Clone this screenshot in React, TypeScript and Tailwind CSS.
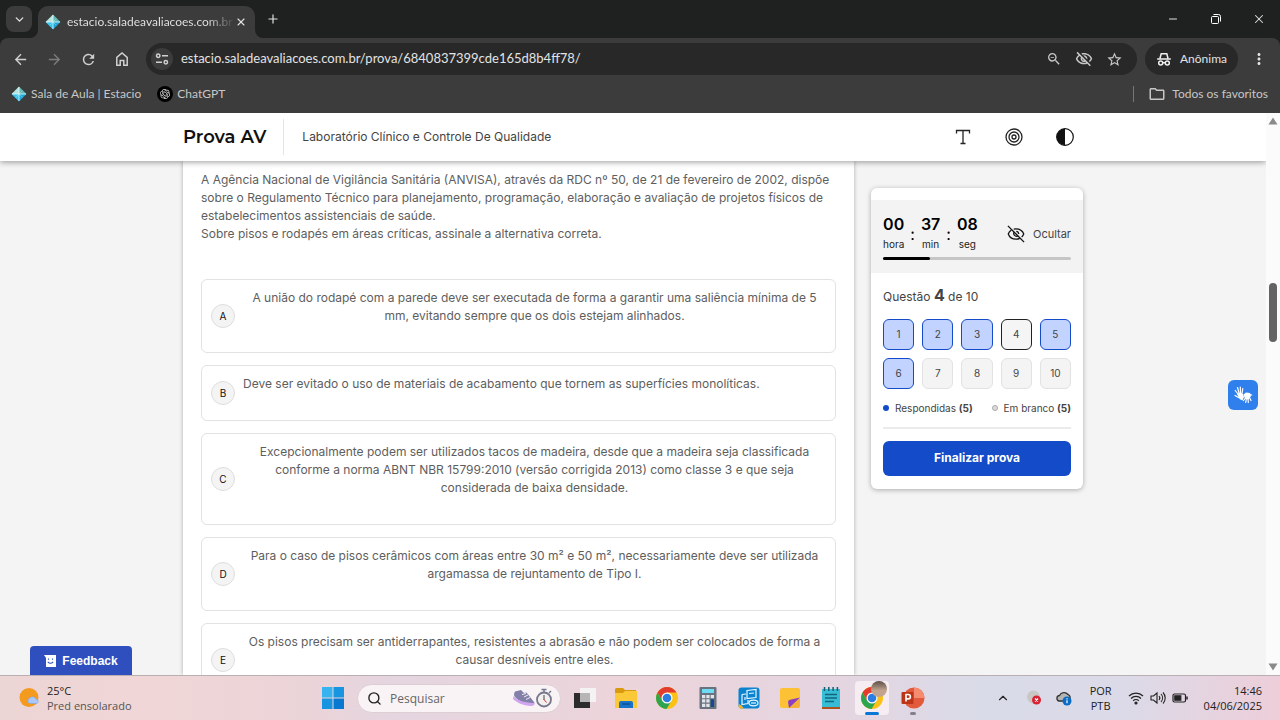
import type { ReactNode } from 'react';
import { ChevronDown, ChevronUp, Minus, Plus, Search, X } from 'lucide-react';
import {
  MdArrowBack,
  MdArrowForward,
  MdMoreVert,
  MdOutlineFolder,
  MdOutlineVisibilityOff,
  MdRefresh,
  MdStarBorder,
  MdZoomOut,
} from 'react-icons/md';
import { SiOpenai } from 'react-icons/si';

const options = [
  {
    letter: 'A',
    text: 'A união do rodapé com a parede deve ser executada de forma a garantir uma saliência mínima de 5 mm, evitando sempre que os dois estejam alinhados.',
    centered: true,
  },
  {
    letter: 'B',
    text: 'Deve ser evitado o uso de materiais de acabamento que tornem as superfícies monolíticas.',
    centered: false,
  },
  {
    letter: 'C',
    text: 'Excepcionalmente podem ser utilizados tacos de madeira, desde que a madeira seja classificada conforme a norma ABNT NBR 15799:2010 (versão corrigida 2013) como classe 3 e que seja considerada de baixa densidade.',
    centered: true,
  },
  {
    letter: 'D',
    text: 'Para o caso de pisos cerâmicos com áreas entre 30 m² e 50 m², necessariamente deve ser utilizada argamassa de rejuntamento de Tipo I.',
    centered: true,
  },
  {
    letter: 'E',
    text: 'Os pisos precisam ser antiderrapantes, resistentes a abrasão e não podem ser colocados de forma a causar desníveis entre eles.',
    centered: true,
  },
];

const answered = [1, 2, 3, 5, 6];
const current = 4;

function EstacioIcon() {
  return (
    <svg viewBox="0 0 16 16" className="size-4 shrink-0" aria-hidden="true">
      <path d="M8 0.5 15.5 8H8Z" fill="#5fb8b5" />
      <path d="M8 0.5 0.5 8H8Z" fill="#b5e2dc" />
      <path d="M0.5 8 8 15.5V8Z" fill="#35c4ee" />
      <path d="M15.5 8 8 15.5V8Z" fill="#1fa5d6" />
      <path d="M8 1v14M1 8h14" stroke="#e6fbff" strokeWidth="0.8" />
      <path d="M4.500 4.500l7 7M11.500 4.500l-7 7" stroke="#bdeef8" strokeWidth="0.4" />
    </svg>
  );
}

function TuneIcon() {
  return (
    <svg viewBox="0 0 14 14" className="size-3.5" fill="none" stroke="#d0d0d0" strokeWidth="1.5" aria-hidden="true">
      <circle cx="3.2" cy="3.7" r="1.7" />
      <path d="M7 3.700h6M1 10.300h6" />
      <circle cx="10.8" cy="10.3" r="1.7" />
    </svg>
  );
}

function HomeIcon() {
  return (
    <svg viewBox="0 0 16 16" className="size-4" fill="none" stroke="currentColor" strokeWidth="1.5" aria-hidden="true">
      <path d="M2.800 14.200V6.300L8 2l5.200 4.300v7.900H9.800V9.500H6.200v4.700Z" />
    </svg>
  );
}

function IncognitoIcon() {
  return (
    <svg viewBox="0 0 16 16" className="size-4" fill="none" stroke="#f0f0f0" strokeWidth="1.5" aria-hidden="true">
      <path d="M4 7.200 5.200 2.700h5.600L12 7.200M1.200 8h13.600" />
      <circle cx="4.7" cy="12" r="2" />
      <circle cx="11.3" cy="12" r="2" />
      <path d="M6.700 11.700h2.600" />
    </svg>
  );
}

function HiddenEyeIcon() {
  return (
    <svg viewBox="0 0 20 20" className="size-[18px]" fill="none" stroke="#111" strokeWidth="1.4" aria-hidden="true">
      <path d="M4.900 5.600C3.200 6.700 1.900 8.300 1.400 10c1.300 3.600 4.700 5.700 8.600 5.700 1.600 0 3-.3 4.200-.9M7.500 4.600C8.300 4.400 9.100 4.300 10 4.300c3.900 0 7.300 2.100 8.600 5.700-.5 1.300-1.300 2.400-2.300 3.300" />
      <path d="M8.200 7.600a3 3 0 0 0 4.100 4.300M10.300 7a3 3 0 0 1 2.700 2.900" />
      <path d="M1 1l18 18" />
    </svg>
  );
}

function SignLanguageIcon() {
  return (
    <svg viewBox="0 0 20 20" className="size-5" fill="#fff" stroke="#fff" strokeLinecap="round" aria-hidden="true">
      <path d="M4 9l3-1.500 3 1.500 1 3-1.500 3.500L6.500 14Z" stroke="none" />
      <path d="M5 9 2.200 5.500M6 8 4.500 2.500M7.500 8 7.300 2M9 8.500l.8-5M5.500 12.500 2 10.500" strokeWidth="1.2" fill="none" />
      <path d="M10.500 9.500 13 7.500l4 .5 1 3-2.500 3.500-3.500-.5Z" stroke="none" />
      <path d="M16.500 9.500l2.200.5M12.500 13l-2 2.500M13.500 13.500l-.8 4M15 13.500l.3 4M16.500 12.500l1.500 3" strokeWidth="1.2" fill="none" />
    </svg>
  );
}

function ChromeIcon() {
  return (
    <svg viewBox="0 0 24 24" className="size-6" aria-hidden="true">
      <circle cx="12" cy="12" r="11" fill="#fbc116" />
      <path d="M2.500 6.500A11 11 0 0 1 21.500 6.500H12L7.200 14.700Z" fill="#e33b2e" />
      <path d="M2.500 6.500A11 11 0 0 0 11.500 23l5-8.300H7.200Z" fill="#2da44e" />
      <circle cx="12" cy="12" r="5.500" fill="#fff" />
      <circle cx="12" cy="12" r="4.300" fill="#2a7de1" />
    </svg>
  );
}

function TimeUnit({ value, label }: { value: string; label: string }) {
  return (
    <div className="flex flex-col items-center">
      <span className="text-base leading-5 font-semibold text-black">{value}</span>
      <span className="text-[10px] leading-5 text-[#222]">{label}</span>
    </div>
  );
}

function TaskButton({ label, children }: { label: string; children: ReactNode }) {
  return (
    <button aria-label={label} className="flex size-[34px] items-center justify-center">
      {children}
    </button>
  );
}

function BrowserChrome() {
  return (
    <div className="shrink-0 bg-[#1f2120] font-[Lato,sans-serif] text-[12px] text-[#e3e3e3]">
      {/* Tabs */}
      <div className="flex h-[38px] items-end">
        <div className="flex h-full items-center px-1.5">
          <button aria-label="Pesquisar guias" className="flex size-[26px] items-center justify-center rounded-lg bg-[#3c3c3c]">
            <ChevronDown size={13} strokeWidth={2.5} />
          </button>
        </div>
        <div className="relative flex h-8 w-[217px] items-center rounded-t-[10px] bg-[#3c3c3c] pr-1.5 pl-[7px]">
          <svg viewBox="0 0 8 8" className="absolute bottom-0 -left-2 size-2" fill="#3c3c3c"><path d="M8 0v8H0a8 8 0 0 0 8-8Z" /></svg>
          <svg viewBox="0 0 8 8" className="absolute -right-2 bottom-0 size-2" fill="#3c3c3c"><path d="M0 0v8h8a8 8 0 0 1-8-8Z" /></svg>
          <EstacioIcon />
          <span className="ml-1.5 bg-linear-to-r from-[#e8e8e8] from-85% to-[#4a4a4a] bg-clip-text whitespace-nowrap text-transparent">
            estacio.saladeavaliacoes.com.br
          </span>
          <button aria-label="Fechar guia" className="ml-auto flex size-5 items-center justify-center">
            <X size={12} strokeWidth={2.2} />
          </button>
        </div>
        <button aria-label="Nova guia" className="ml-2 flex h-[38px] w-5 items-center justify-center">
          <Plus size={14} />
        </button>
        <div className="ml-auto flex h-[38px] items-center">
          <button aria-label="Minimizar" className="flex w-[43px] justify-center">
            <Minus size={12} strokeWidth={2} />
          </button>
          <button aria-label="Restaurar" className="flex w-[43px] justify-center">
            <svg viewBox="0 0 10 10" className="size-2.5" fill="none" stroke="#fff">
              <rect x="0.5" y="2.5" width="7" height="7" rx="1" />
              <path d="M2.500.5h5a2 2 0 0 1 2 2v5" />
            </svg>
          </button>
          <button aria-label="Fechar" className="flex w-[43px] justify-center">
            <X size={14} strokeWidth={1.8} />
          </button>
        </div>
      </div>

      {/* Address bar */}
      <div className="flex h-[42px] items-center rounded-t-lg bg-[#3c3c3c] px-3">
        <div className="flex items-center gap-[17px] pr-4 text-[#d0d0d0]">
          <button aria-label="Voltar"><MdArrowBack size={17} /></button>
          <button aria-label="Avançar" className="text-[#7c7c7c]"><MdArrowForward size={17} /></button>
          <button aria-label="Recarregar"><MdRefresh size={17} /></button>
          <button aria-label="Página inicial"><HomeIcon /></button>
        </div>
        <div className="flex h-8 flex-1 items-center rounded-full bg-[#282828] pr-3.5 pl-[5px]">
          <button aria-label="Informações do site" className="flex size-[22px] items-center justify-center rounded-full bg-[#3c3c3c]">
            <TuneIcon />
          </button>
          <input
            aria-label="Endereço"
            className="ml-2 min-w-0 flex-1 bg-transparent text-[13px] outline-none"
            defaultValue="estacio.saladeavaliacoes.com.br/prova/6840837399cde165d8b4ff78/"
          />
          <div className="flex items-center gap-[13px] text-[#c7c7c7]">
            <button aria-label="Zoom"><MdZoomOut size={16} /></button>
            <button aria-label="Cookies bloqueados"><MdOutlineVisibilityOff size={18} /></button>
            <button aria-label="Favoritar"><MdStarBorder size={17} /></button>
          </div>
        </div>
        <button className="ml-2 flex h-8 items-center gap-2 rounded-full bg-[#282828] px-[11px]">
          <IncognitoIcon />
          Anônima
        </button>
        <button aria-label="Menu" className="ml-3"><MdMoreVert size={18} /></button>
      </div>

      {/* Bookmarks */}
      <div className="flex h-[33px] items-start gap-4 bg-[#3c3c3c] pt-1 pr-3 pl-[11px] leading-5 text-[#c7c7c7]">
        <a href="#sala" className="flex items-center gap-1">
          <EstacioIcon />
          Sala de Aula | Estacio
        </a>
        <a href="#chatgpt" className="flex items-center gap-1">
          <span className="flex size-4 items-center justify-center rounded-full bg-black">
            <SiOpenai size={10} color="#ddd" />
          </span>
          ChatGPT
        </a>
        <button className="ml-auto flex items-center gap-1.5">
          <span className="mr-2 h-4 w-px bg-[#777]" />
          <MdOutlineFolder size={18} />
          Todos os favoritos
        </button>
      </div>
    </div>
  );
}

function ExamHeader() {
  return (
    <header className="relative z-10 h-12 shrink-0 bg-white shadow-[0_1px_6px_rgba(0,0,0,0.4)]">
      <div className="mx-auto flex h-full max-w-[900px] items-center">
        <h1 className="pr-[17px] font-[Montserrat,Inter,sans-serif] text-lg font-semibold text-[#111]">Prova AV</h1>
        <p className="flex h-9 items-center border-l border-[#e4e4e4] pl-[18px] text-[12px] text-[#444]">
          Laboratório Clínico e Controle De Qualidade
        </p>
        <div className="ml-auto flex items-center gap-[33px] pr-[9px] text-[#222]">
          <button aria-label="Tamanho do texto">
            <svg viewBox="0 0 18 18" className="size-[18px]" fill="none" stroke="currentColor" strokeWidth="1.3">
              <path d="M2.500 5.500v-3h13v3M9 2.500v13M6.500 15.500h5" />
            </svg>
          </button>
          <button aria-label="Modo foco">
            <svg viewBox="0 0 18 18" className="size-[18px]" fill="none" stroke="currentColor" strokeWidth="1.3">
              <circle cx="9" cy="9" r="8" />
              <circle cx="9" cy="9" r="5" />
              <circle cx="9" cy="9" r="2" />
            </svg>
          </button>
          <button aria-label="Contraste">
            <svg viewBox="0 0 18 18" className="size-[18px]" aria-hidden="true">
              <circle cx="9" cy="9" r="8.3" fill="none" stroke="#111" strokeWidth="1.2" />
              <path d="M9 .7a8.300 8.300 0 0 0 0 16.600Z" fill="#111" />
            </svg>
          </button>
        </div>
      </div>
    </header>
  );
}

function Question() {
  return (
    <section className="flex-1 bg-white px-[18px] pt-2.5 text-[12px] leading-[18px] text-[#5e5e5e] shadow-[0_0_4px_rgba(0,0,0,0.3)]">
      <p>
        A Agência Nacional de Vigilância Sanitária (ANVISA), através da RDC nº 50, de 21 de fevereiro de 2002, dispõe
        sobre o Regulamento Técnico para planejamento, programação, elaboração e avaliação de projetos físicos de
        estabelecimentos assistenciais de saúde.
      </p>
      <p>Sobre pisos e rodapés em áreas críticas, assinale a alternativa correta.</p>
      <div className="mt-9 flex flex-col gap-3">
        {options.map((option) => (
          <button key={option.letter} className="flex items-center rounded-md border border-[#e2e2e2] p-[9px]">
            <span className="flex size-6 shrink-0 items-center justify-center rounded-full border border-[#dedede] bg-[#f4f4f4] text-[10px] text-[#111]">
              {option.letter}
            </span>
            <span className={`ml-2 flex-1 pb-[18px] ${option.centered ? 'text-center' : 'text-left'}`}>
              {option.text}
            </span>
          </button>
        ))}
      </div>
    </section>
  );
}

function ExamSidebar() {
  return (
    <aside className="mt-[27px] w-[212px] shrink-0 self-start rounded-md bg-white pt-3 pb-[13px] text-[#444] shadow-[0_1px_5px_rgba(0,0,0,0.3)]">
      <div className="h-[73px] bg-[#f3f3f3] px-3 pt-3.5">
        <div className="flex items-center">
          <TimeUnit value="00" label="hora" />
          <span className="px-1.5 text-base text-black">:</span>
          <TimeUnit value="37" label="min" />
          <span className="px-1.5 text-base text-black">:</span>
          <TimeUnit value="08" label="seg" />
          <button className="ml-auto flex items-center gap-2 text-[11px]">
            <HiddenEyeIcon />
            Ocultar
          </button>
        </div>
        <div className="mt-[3px] h-[3px] rounded-full bg-[#c6c6c6]">
          <div className="h-full w-1/4 rounded-full bg-black" />
        </div>
      </div>
      <div className="px-3 pt-[11px]">
        <p className="text-[12px] leading-[22px]">
          Questão <strong className="text-base leading-[22px] font-bold">{current}</strong> de 10
        </p>
        <div className="mt-[11px] grid grid-cols-5 gap-2">
          {Array.from({ length: 10 }, (_, i) => i + 1).map((n) => (
            <button
              key={n}
              className={`h-[31px] rounded-md border text-[10px] ${
                n === current
                  ? 'border-[#222] bg-[#f5f5f5]'
                  : answered.includes(n)
                  ? 'border-[#144bc8] bg-[#c3d3ff]'
                  : 'border-[#e2e2e2] bg-[#f4f4f4]'
              }`}
            >
              {n}
            </button>
          ))}
        </div>
        <div className="mt-2.5 flex justify-between text-[10px] leading-[18px]">
          <span className="flex items-center gap-1.5">
            <span className="size-1.5 rounded-full bg-[#144bc8]" />
            <span>Respondidas <b>(5)</b></span>
          </span>
          <span className="flex items-center gap-1.5">
            <span className="size-1.5 rounded-full border border-[#aaa] bg-[#ddd]" />
            <span>Em branco <b>(5)</b></span>
          </span>
        </div>
        <hr className="mt-2.5 border-t-2 border-[#ebebeb]" />
        <button className="mt-3 h-[35px] w-full rounded-md bg-[#144bc8] pb-0.5 text-[12px] font-bold text-white">
          Finalizar prova
        </button>
      </div>
    </aside>
  );
}

function PageScrollbar() {
  return (
    <div className="flex w-3.5 shrink-0 flex-col items-center bg-[#fbfbfb] py-1">
      <svg viewBox="0 0 10 8" className="h-2 w-2.5" fill="#8a8a8a"><path d="M5 0.500 9.500 7.500h-9Z" /></svg>
      <div className="mt-[158px] h-[59px] w-2 rounded-full bg-[#636363]" />
      <svg viewBox="0 0 10 8" className="mt-auto h-2 w-2.5" fill="#8a8a8a"><path d="M5 7.500 9.500.5h-9Z" /></svg>
    </div>
  );
}

function Taskbar() {
  return (
    <footer className="flex h-[45px] shrink-0 items-center border-t border-[#b9aeb2] bg-[linear-gradient(90deg,#ecd5d5_0%,#f0d6d6_10%,#ebd4d8_24%,#e4d5e0_31%,#ecd4da_48%,#e5d5e0_65%,#d9dbe8_77%,#dcdae8_88%,#edced9_100%)] px-[18px] font-['Open_Sans',sans-serif] text-[11px] leading-[15px] text-[#222]">
      <button className="flex flex-1 items-center gap-[7px] text-left">
        <svg viewBox="0 0 22 22" className="size-[22px]" aria-hidden="true">
          <circle cx="11" cy="10.5" r="9.5" fill="#f39a1f" />
          <path d="M11.500 16.500a3 3 0 0 1 .3-5.500 4 4 0 0 1 6.400 1.200 2.300 2.300 0 0 1 .8 4.300Z" fill="#a9c8f7" stroke="#7ea5e2" strokeWidth="0.6" />
        </svg>
        <span>
          25°C
          <span className="block text-[#555]">Pred ensolarado</span>
        </span>
      </button>

      <div className="flex items-center gap-[7px] pr-[34px]">
        <TaskButton label="Iniciar">
          <svg viewBox="0 0 22 22" className="size-[22px]">
            <path d="M0 0h10.500v10.500H0Z" fill="#37b4f0" />
            <path d="M11.500 0H22v10.500H11.500ZM0 11.500h10.500V22H0Z" fill="#1795e0" />
            <path d="M11.500 11.500H22V22H11.500Z" fill="#0878d0" />
          </svg>
        </TaskButton>
        <label className="flex h-[29px] w-[204px] items-center rounded-full border border-[#dccfd4] bg-[#f9f3f5] pr-1.5 pl-[9px]">
          <Search size={15} strokeWidth={2.2} className="shrink-0" />
          <input aria-label="Pesquisar" placeholder="Pesquisar" className="ml-2 min-w-0 flex-1 bg-transparent text-[12px] outline-none placeholder:text-[#666]" />
          <svg viewBox="0 0 42 20" className="h-5 w-[42px]" aria-hidden="true">
            <path d="M3 3.500 9 2l3 3 2.500-.5L22 14c1 1.500 0 3-2 3-7 0-13-4-17-8-1.500-1.500-1-4 0-5.500Z" fill="#8280a8" />
            <path d="M1.500 8C6 13 14 15 22.500 15c.5 2-1 3-3.500 3C11 18 4 14 1 11Z" fill="#cfa6ee" />
            <path d="M10 6.500l4-1M12 9l4-2M14 11.500l4-2" stroke="#eee" />
            <circle cx="32" cy="11.5" r="7" fill="#f3efee" stroke="#75788c" strokeWidth="1.8" />
            <path d="M32 4V1M29.500 1.500h5M37 5l2-2" stroke="#75788c" strokeWidth="1.5" />
            <path d="M32 12V7" stroke="#444" />
            <path d="M32 11.500l2.500 3" stroke="#c33" />
          </svg>
        </label>
        <TaskButton label="Visão de tarefas">
          <svg viewBox="0 0 24 24" className="size-6">
            <path d="M1 7h16v15H1Z" fill="#2c2c2c" />
            <path d="M7 2h16v14H7Z" fill="#f5f2f3" />
            <path d="M7 7h10v9H7Z" fill="#b8b5b6" />
          </svg>
        </TaskButton>
        <TaskButton label="Explorador de Arquivos">
          <svg viewBox="0 0 24 24" className="size-6">
            <path d="M1 3.500Q1 2 2.500 2H9l2 2h11v5H1Z" fill="#d99a10" />
            <path d="M1 7h8l2-2h12v17H1Z" fill="#fbc938" />
            <path d="M5 22v-5q0-2 2-2h10q2 0 2 2v5Z" fill="#1673c9" />
            <path d="M8 18h8" stroke="#0b4f92" strokeWidth="1.5" />
          </svg>
        </TaskButton>
        <TaskButton label="Google Chrome"><ChromeIcon /></TaskButton>
        <TaskButton label="Calculadora">
          <svg viewBox="0 0 24 24" className="size-6">
            <rect x="3.5" y="1" width="17" height="22" rx="1" fill="#69727f" />
            <path d="M6 3h12v4H6Z" fill="#6fdcf5" />
            <path d="M6 9h3.300v3.300H6ZM10.300 9h3.300v3.300h-3.300ZM14.700 9H18v3.300h-3.300ZM6 13.300h3.300v3.300H6ZM10.300 13.300h3.300v3.300h-3.300ZM6 17.700h3.300V21H6ZM10.300 17.700h3.300V21h-3.300Z" fill="#e1e5ea" />
            <path d="M14.700 13.300H18V21h-3.300Z" fill="#16488f" />
          </svg>
        </TaskButton>
        <TaskButton label="Driver Intel">
          <svg viewBox="0 0 24 24" className="size-6" fill="none" stroke="#e8f7ff" strokeWidth="1.2">
            <rect x="1.5" y="1.5" width="21" height="21" rx="3" fill="#0c83cf" stroke="none" />
            <path d="M2 18q3 1 5 4.500H3.500Q1.500 22 1.500 20Z" fill="#f0b420" stroke="none" />
            <path d="M10 4.500 19 3.500v8l-9 1ZM5 8.500v10l6-1v-3.500M5 8.500l4-.5M8 11v3M12 7.500l5-.5" />
            <ellipse cx="16.5" cy="17" rx="4.5" ry="2.8" />
            <path d="M14 17h5" />
          </svg>
        </TaskButton>
        <TaskButton label="Notas Autoadesivas">
          <svg viewBox="0 0 24 24" className="size-6">
            <path d="M2 4q0-2 2-2h16q2 0 2 2v9l-9 9H4q-2 0-2-2Z" fill="#fdc136" />
            <path d="M22 12v8q0 2-2 2h-9Z" fill="#f6b03a" />
            <path d="M11 22l-1-6q0-2 2-2.300L22 11.500Z" fill="#8c3fc2" />
          </svg>
        </TaskButton>
        <TaskButton label="Bloco de Notas">
          <svg viewBox="0 0 24 24" className="size-6">
            <path d="M3 3h18v18H3Z" fill="#37bcd5" />
            <path d="M6 8.500h12M6 12h12M6 15.500h9" stroke="#14647d" strokeWidth="1.4" />
            <path d="M5.500 1v4M9.800 1v4M14.100 1v4M18.400 1v4" stroke="#185d70" strokeWidth="1.5" />
            <path d="M3 21h18v2H3Z" fill="#ad541e" />
          </svg>
        </TaskButton>
        <button aria-label="Google Chrome em execução" className="relative flex size-[34px] items-center justify-center rounded bg-[#f5edf2]">
          <ChromeIcon />
          <span className="absolute top-0 right-0.5 size-4 rounded-full bg-linear-to-b from-[#5d5048] to-[#c2a48e] to-60%" />
          <span className="absolute bottom-0 h-[3px] w-3.5 rounded-full bg-[#0877d6]" />
        </button>
        <button aria-label="PowerPoint" className="relative flex size-[34px] items-center justify-center">
          <svg viewBox="0 0 24 24" className="size-6">
            <circle cx="13" cy="12" r="10.5" fill="#e2593b" />
            <path d="M13 1.500A10.500 10.500 0 0 1 23.500 12H13Z" fill="#f58b6f" />
            <rect x="0.5" y="6" width="12" height="12" rx="1" fill="#bd3519" />
            <path d="M5 15.500v-7h2.200a2.200 2.200 0 0 1 0 4.400H5" stroke="#fff" strokeWidth="1.6" fill="none" />
          </svg>
          <span className="absolute bottom-0 h-[3px] w-1.5 rounded-full bg-[#84808a]" />
        </button>
      </div>

      <div className="flex flex-1 items-center justify-end">
        <button aria-label="Mostrar ícones ocultos"><ChevronUp size={14} /></button>
        <svg viewBox="0 0 16 16" className="ml-4 size-4">
          <circle cx="7.5" cy="7" r="6.5" fill="#c9c7c4" />
          <circle cx="10.5" cy="10" r="4.5" fill="#d92232" />
          <path d="m9 8.500 3 3m0-3-3 3" stroke="#fff" strokeWidth="1.2" />
        </svg>
        <svg viewBox="0 0 16 16" className="ml-3.5 size-4">
          <path d="M3 11A2.800 2.800 0 0 1 3.500 5.500a5 5 0 0 1 8.500-1 3.500 3.500 0 0 1 2 4V11Z" fill="#b5b5b5" stroke="#333" strokeWidth="1.3" />
          <circle cx="11" cy="11" r="4.5" fill="#0b6cc4" />
          <path d="M11 10.200v3M11 8.200v1.200" stroke="#fff" strokeWidth="1.2" />
        </svg>
        <button className="ml-[18px] text-center">POR<br />PTB</button>
        <button aria-label="Rede, som e bateria" className="ml-4 flex items-center gap-1.5">
          <svg viewBox="0 0 16 16" className="size-4" fill="none" stroke="#222" strokeWidth="1.2">
            <path d="M1 6a10 10 0 0 1 14 0M3 8.500a7 7 0 0 1 10 0M5.200 10.800a4 4 0 0 1 5.600 0" />
            <circle cx="8" cy="13" r="1" fill="#222" />
          </svg>
          <svg viewBox="0 0 16 16" className="size-4" fill="none" stroke="#222" strokeWidth="1.1">
            <path d="M1 6h2.500L7 3v10L3.500 10H1ZM9 6a3 3 0 0 1 0 4M11 4a6 6 0 0 1 0 8M13 2.500a8 8 0 0 1 0 11" />
          </svg>
          <svg viewBox="0 0 16 16" className="size-4" fill="none" stroke="#222" strokeWidth="1.2">
            <rect x="1" y="4" width="12.5" height="8" rx="1.5" />
            <path d="M2.800 5.800h6v4.400h-6Z" fill="#222" />
            <path d="M15 6.500v3" strokeWidth="1.5" />
          </svg>
        </button>
        <button className="ml-4 text-right">14:46<br />04/06/2025</button>
      </div>
    </footer>
  );
}

export default function App() {
  return (
    <div className="flex h-screen flex-col overflow-hidden font-[Inter,sans-serif]">
      <BrowserChrome />
      <div className="flex min-h-0 flex-1">
        <main className="relative flex min-w-0 flex-1 flex-col overflow-hidden bg-[#f4f4f4]">
          <ExamHeader />
          <div className="mx-auto flex min-h-0 w-full max-w-[900px] flex-1 gap-[17px]">
            <Question />
            <ExamSidebar />
          </div>
          <button className="absolute bottom-0 left-[30px] flex h-[29px] w-[102px] items-center justify-center gap-1.5 rounded-t bg-[#2f4fbf] font-['Liberation_Sans',sans-serif] text-[12px] font-bold text-white">
            <svg viewBox="0 0 12 12" className="size-3">
              <path d="M0 0h12v12H2V3Z" fill="#fff" />
              <path d="M4.500 3.500v1.300M8.500 3.500v1.300M3.800 6.800q2.700 3 5.400 0" stroke="#2f4fbf" strokeWidth="1.1" fill="none" />
            </svg>
            Feedback
          </button>
          <button aria-label="VLibras" className="absolute top-[267px] right-2 flex size-[30px] items-center justify-center rounded-md bg-[#2f80ed]">
            <SignLanguageIcon />
          </button>
        </main>
        <PageScrollbar />
      </div>
      <Taskbar />
    </div>
  );
}
